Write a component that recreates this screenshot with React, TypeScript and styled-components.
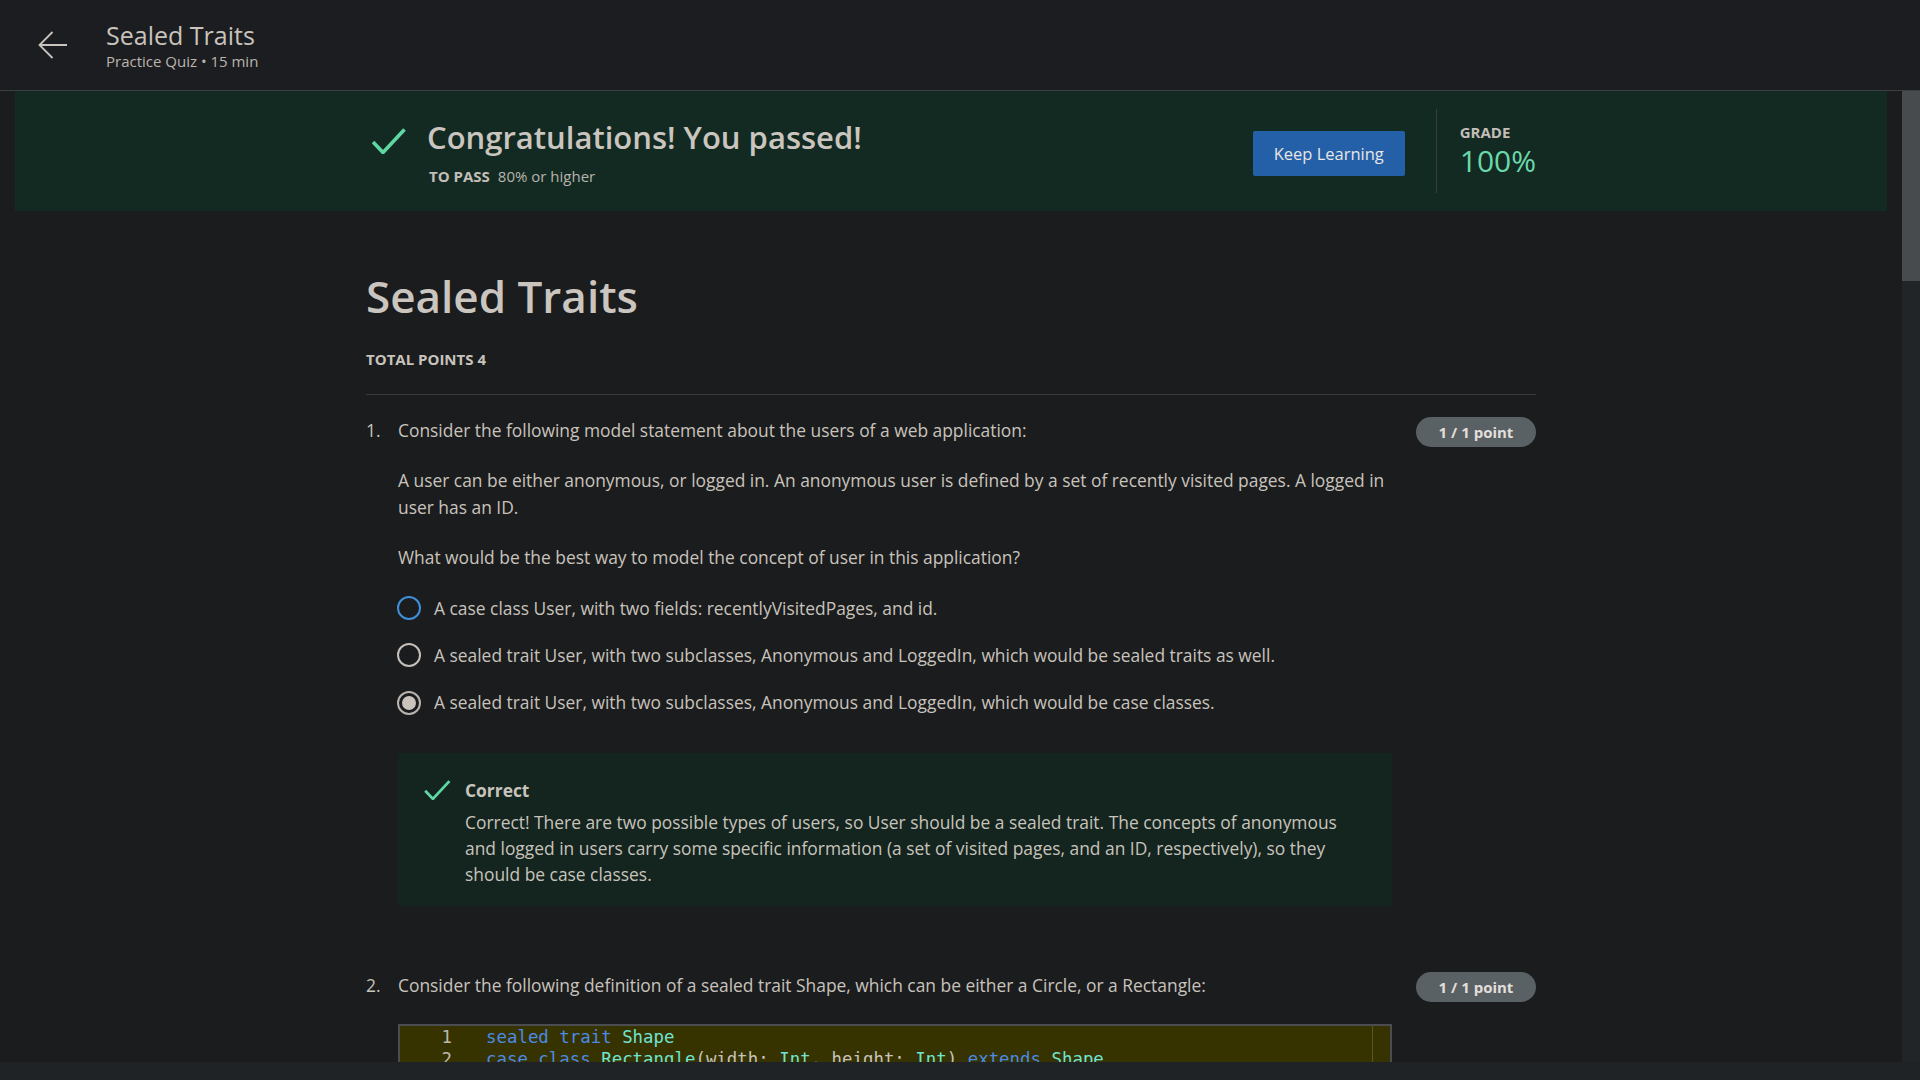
import React from "react";
import styled, { createGlobalStyle } from "styled-components";

const GlobalStyle = createGlobalStyle`
  html, body { margin: 0; padding: 0; background: #1b1c1e; overflow: hidden; }
  body { font-family: "Open Sans", "Noto Sans", sans-serif; color: #c8c3bc; }
  * { box-sizing: border-box; }
`;

const Page = styled.div`
  width: 1920px;
  height: 1080px;
  display: grid;
  grid-template-rows: 91px 1fr;
  background: #1b1c1e;
`;

const Header = styled.header`
  display: flex;
  align-items: center;
  gap: 38px;
  padding-left: 38px;
  background: #1c1d20;
  border-bottom: 1px solid #3c3f42;
`;

const BackIcon = styled.svg`
  width: 30px;
  height: 28px;
  flex: none;
`;

const HeaderText = styled.div`
  display: flex;
  flex-direction: column;
`;

const HeaderTitle = styled.h1`
  margin: 0;
  font-size: 25px;
  line-height: 32px;
  font-weight: 400;
  color: #c8c3bc;
`;

const HeaderSub = styled.div`
  font-size: 15px;
  line-height: 20px;
  color: #bab5ae;
`;

const Viewport = styled.div`
  min-height: 0;
  display: grid;
  grid-template-columns: 1fr 18px;
  grid-template-rows: 1fr 18px;
`;

const ScrollArea = styled.main`
  min-height: 0;
  overflow: hidden;
`;

const VTrack = styled.div`
  background: #222527;
  display: flex;
  flex-direction: column;
`;

const VThumb = styled.div`
  height: 190px;
  background: #474b4e;
`;

const HTrack = styled.div`
  background: #202325;
`;

const Corner = styled.div`
  background: #202325;
`;

const Banner = styled.section`
  margin: 0 15px;
  height: 120px;
  background: #132a23;
  display: flex;
  justify-content: center;
`;

const Container = styled.div`
  width: 1170px;
  margin: 0 auto;
`;

const BannerInner = styled(Container)`
  display: flex;
  align-items: center;
  justify-content: space-between;
`;

const PassRow = styled.div`
  display: flex;
  align-items: flex-start;
  gap: 21px;
  padding-left: 6px;
`;

const PassCheck = styled.svg`
  width: 34px;
  height: 26px;
  margin-top: 11px;
  flex: none;
`;

const PassText = styled.div`
  display: flex;
  flex-direction: column;
`;

const PassTitle = styled.h2`
  margin: 0 0 9px;
  font-size: 31px;
  line-height: 40px;
  font-weight: 600;
  color: #cac5be;
`;

const PassReq = styled.div`
  font-size: 15px;
  line-height: 20px;
  color: #b8b3ab;
  padding-left: 2px;
`;

const ReqLabel = styled.span`
  font-weight: 700;
  color: #c3beb7;
  margin-right: 8px;
`;

const RightGroup = styled.div`
  display: flex;
  align-items: center;
`;

const PrimaryButton = styled.button`
  width: 152px;
  height: 45px;
  margin-top: 4px;
  border: none;
  border-radius: 2px;
  background: #2360a8;
  color: #e8e6e3;
  font-family: "Open Sans", "Noto Sans", sans-serif;
  font-size: 16.5px;
  font-weight: 400;
  padding: 0;
`;

const VDivider = styled.div`
  width: 1px;
  height: 84px;
  background: #3a3d3f;
  margin: 0 23px 0 31px;
`;

const GradeBlock = styled.div`
  min-width: 75px;
  display: flex;
  flex-direction: column;
`;

const GradeLabel = styled.div`
  font-size: 15px;
  line-height: 20px;
  font-weight: 700;
  color: #c3beb7;
`;

const GradeValue = styled.div`
  font-size: 30px;
  line-height: 38px;
  font-weight: 400;
  color: #6ad8aa;
`;

const PageTitle = styled.h1`
  margin: 56px 0 0;
  font-size: 44px;
  line-height: 58px;
  font-weight: 600;
  color: #cac5be;
`;

const TotalPoints = styled.div`
  margin-top: 24px;
  font-size: 15px;
  line-height: 20px;
  font-weight: 700;
  color: #c8c3bc;
`;

const Rule = styled.hr`
  margin: 25px 0 0;
  border: none;
  height: 1px;
  background: #3a3c3f;
`;

const QuestionList = styled.ol`
  list-style: none;
  margin: 22px 0 0;
  padding: 0;
  display: flex;
  flex-direction: column;
  gap: 66px;
`;

const Question = styled.li`
  display: grid;
  grid-template-columns: 32px 994px 1fr 120px;
  font-size: 17.4px;
  line-height: 26.4px;
`;

const QNumber = styled.div`
  color: #c8c3bc;
`;

const QBody = styled.div`
  display: flex;
  flex-direction: column;
`;

const Para = styled.p<{ $gap?: number }>`
  margin: ${(p) => p.$gap ?? 0}px 0 0;
  color: #c8c3bc;
`;

const Badge = styled.div`
  grid-column: 4;
  height: 30px;
  border-radius: 15px;
  background: #5a6164;
  color: #e2dfda;
  font-size: 15px;
  font-weight: 700;
  display: flex;
  align-items: center;
  justify-content: center;
`;

const Options = styled.div`
  margin-top: 24px;
  display: flex;
  flex-direction: column;
  gap: 21px;
`;

const Option = styled.label`
  display: flex;
  align-items: center;
  gap: 13px;
  height: 26.4px;
  margin-left: -1px;
`;

const Radio = styled.span<{ $state: "focus" | "empty" | "checked" }>`
  width: 24px;
  height: 24px;
  flex: none;
  border-radius: 50%;
  border: 2px solid
    ${(p) => (p.$state === "focus" ? "#3f8ed9" : p.$state === "checked" ? "#b8b3ac" : "#c4bfb8")};
  display: flex;
  align-items: center;
  justify-content: center;
  &::after {
    content: "";
    width: 14px;
    height: 14px;
    border-radius: 50%;
    background: ${(p) => (p.$state === "checked" ? "#c9c3bb" : "transparent")};
  }
`;

const Feedback = styled.div`
  margin-top: 37px;
  background: #14251f;
  padding: 24px 24px 19px 26px;
  display: flex;
  gap: 14px;
`;

const FeedbackCheck = styled.svg`
  width: 27px;
  height: 20px;
  margin-top: 3px;
  flex: none;
`;

const FeedbackText = styled.div`
  display: flex;
  flex-direction: column;
  gap: 6px;
`;

const FeedbackTitle = styled.div`
  font-weight: 700;
  line-height: 26px;
  color: #c8c3bc;
`;

const FeedbackBody = styled.div`
  line-height: 26px;
  color: #c8c3bc;
`;

const CodeBlock = styled.div`
  margin-top: 26px;
  border: 2px solid #4a4c4f;
  background: #363300;
  display: flex;
  height: 140px;
`;

const CodeLines = styled.div`
  flex: 1;
  font-family: "DejaVu Sans Mono", "Liberation Mono", monospace;
  font-size: 17.4px;
  line-height: 22px;
`;

const CodeLine = styled.div`
  display: flex;
  white-space: pre;
  height: 22px;
`;

const LineNo = styled.span`
  width: 52px;
  text-align: right;
  color: #bdb8b0;
  margin-right: 34px;
  flex: none;
`;

const Tok = styled.span<{ $k?: "kw" | "type" | "plain" }>`
  color: ${(p) => (p.$k === "kw" ? "#4b8ae6" : p.$k === "type" ? "#70e3d3" : "#c8c3bc")};
`;

const CodeScroll = styled.div`
  width: 18px;
  border-left: 1px solid #5a5725;
`;

const Check = () => (
  <path d="M1 14 L11 24.5 L32.5 1.5" fill="none" stroke="#5fd7a3" strokeWidth="3.6" />
);

export default function App() {
  return (
    <>
      <GlobalStyle />
      <Page>
        <Header>
          <BackIcon viewBox="0 0 30 28">
            <path d="M29 14 H1.5 M14.5 1 L1.5 14 L14.5 27" fill="none" stroke="#c8c3bc" strokeWidth="1.8" />
          </BackIcon>
          <HeaderText>
            <HeaderTitle>Sealed Traits</HeaderTitle>
            <HeaderSub>Practice Quiz • 15 min</HeaderSub>
          </HeaderText>
        </Header>
        <Viewport>
          <ScrollArea>
            <Banner>
              <BannerInner>
                <PassRow>
                  <PassCheck viewBox="0 0 34 26">
                    <Check />
                  </PassCheck>
                  <PassText>
                    <PassTitle>Congratulations! You passed!</PassTitle>
                    <PassReq>
                      <ReqLabel>TO PASS</ReqLabel>80% or higher
                    </PassReq>
                  </PassText>
                </PassRow>
                <RightGroup>
                  <PrimaryButton>Keep Learning</PrimaryButton>
                  <VDivider />
                  <GradeBlock>
                    <GradeLabel>GRADE</GradeLabel>
                    <GradeValue>100%</GradeValue>
                  </GradeBlock>
                </RightGroup>
              </BannerInner>
            </Banner>
            <Container>
              <PageTitle>Sealed Traits</PageTitle>
              <TotalPoints>TOTAL POINTS 4</TotalPoints>
              <Rule />
              <QuestionList>
                <Question>
                  <QNumber>1.</QNumber>
                  <QBody>
                    <Para>Consider the following model statement about the users of a web application:</Para>
                    <Para $gap={24}>
                      A user can be either anonymous, or logged in. An anonymous user is defined by a set of recently
                      visited pages. A logged in user has an ID.
                    </Para>
                    <Para $gap={24}>What would be the best way to model the concept of user in this application?</Para>
                    <Options>
                      <Option>
                        <Radio $state="focus" />
                        A case class User, with two fields: recentlyVisitedPages, and id.
                      </Option>
                      <Option>
                        <Radio $state="empty" />
                        A sealed trait User, with two subclasses, Anonymous and LoggedIn, which would be sealed traits as
                        well.
                      </Option>
                      <Option>
                        <Radio $state="checked" />
                        A sealed trait User, with two subclasses, Anonymous and LoggedIn, which would be case classes.
                      </Option>
                    </Options>
                    <Feedback>
                      <FeedbackCheck viewBox="0 0 34 26">
                        <Check />
                      </FeedbackCheck>
                      <FeedbackText>
                        <FeedbackTitle>Correct</FeedbackTitle>
                        <FeedbackBody>
                          Correct! There are two possible types of users, so User should be a sealed trait. The concepts
                          of anonymous and logged in users carry some specific information (a set of visited pages, and
                          an ID, respectively), so they should be case classes.
                        </FeedbackBody>
                      </FeedbackText>
                    </Feedback>
                  </QBody>
                  <Badge>1 / 1 point</Badge>
                </Question>
                <Question>
                  <QNumber>2.</QNumber>
                  <QBody>
                    <Para>
                      Consider the following definition of a sealed trait Shape, which can be either a Circle, or a
                      Rectangle:
                    </Para>
                    <CodeBlock>
                      <CodeLines>
                        <CodeLine>
                          <LineNo>1</LineNo>
                          <Tok $k="kw">sealed trait</Tok>
                          <Tok> </Tok>
                          <Tok $k="type">Shape</Tok>
                        </CodeLine>
                        <CodeLine>
                          <LineNo>2</LineNo>
                          <Tok $k="kw">case class</Tok>
                          <Tok> </Tok>
                          <Tok $k="type">Rectangle</Tok>
                          <Tok>(width: </Tok>
                          <Tok $k="type">Int</Tok>
                          <Tok>, height: </Tok>
                          <Tok $k="type">Int</Tok>
                          <Tok>) </Tok>
                          <Tok $k="kw">extends</Tok>
                          <Tok> </Tok>
                          <Tok $k="type">Shape</Tok>
                        </CodeLine>
                      </CodeLines>
                      <CodeScroll />
                    </CodeBlock>
                  </QBody>
                  <Badge>1 / 1 point</Badge>
                </Question>
              </QuestionList>
            </Container>
          </ScrollArea>
          <VTrack>
            <VThumb />
          </VTrack>
          <HTrack />
          <Corner />
        </Viewport>
      </Page>
    </>
  );
}
